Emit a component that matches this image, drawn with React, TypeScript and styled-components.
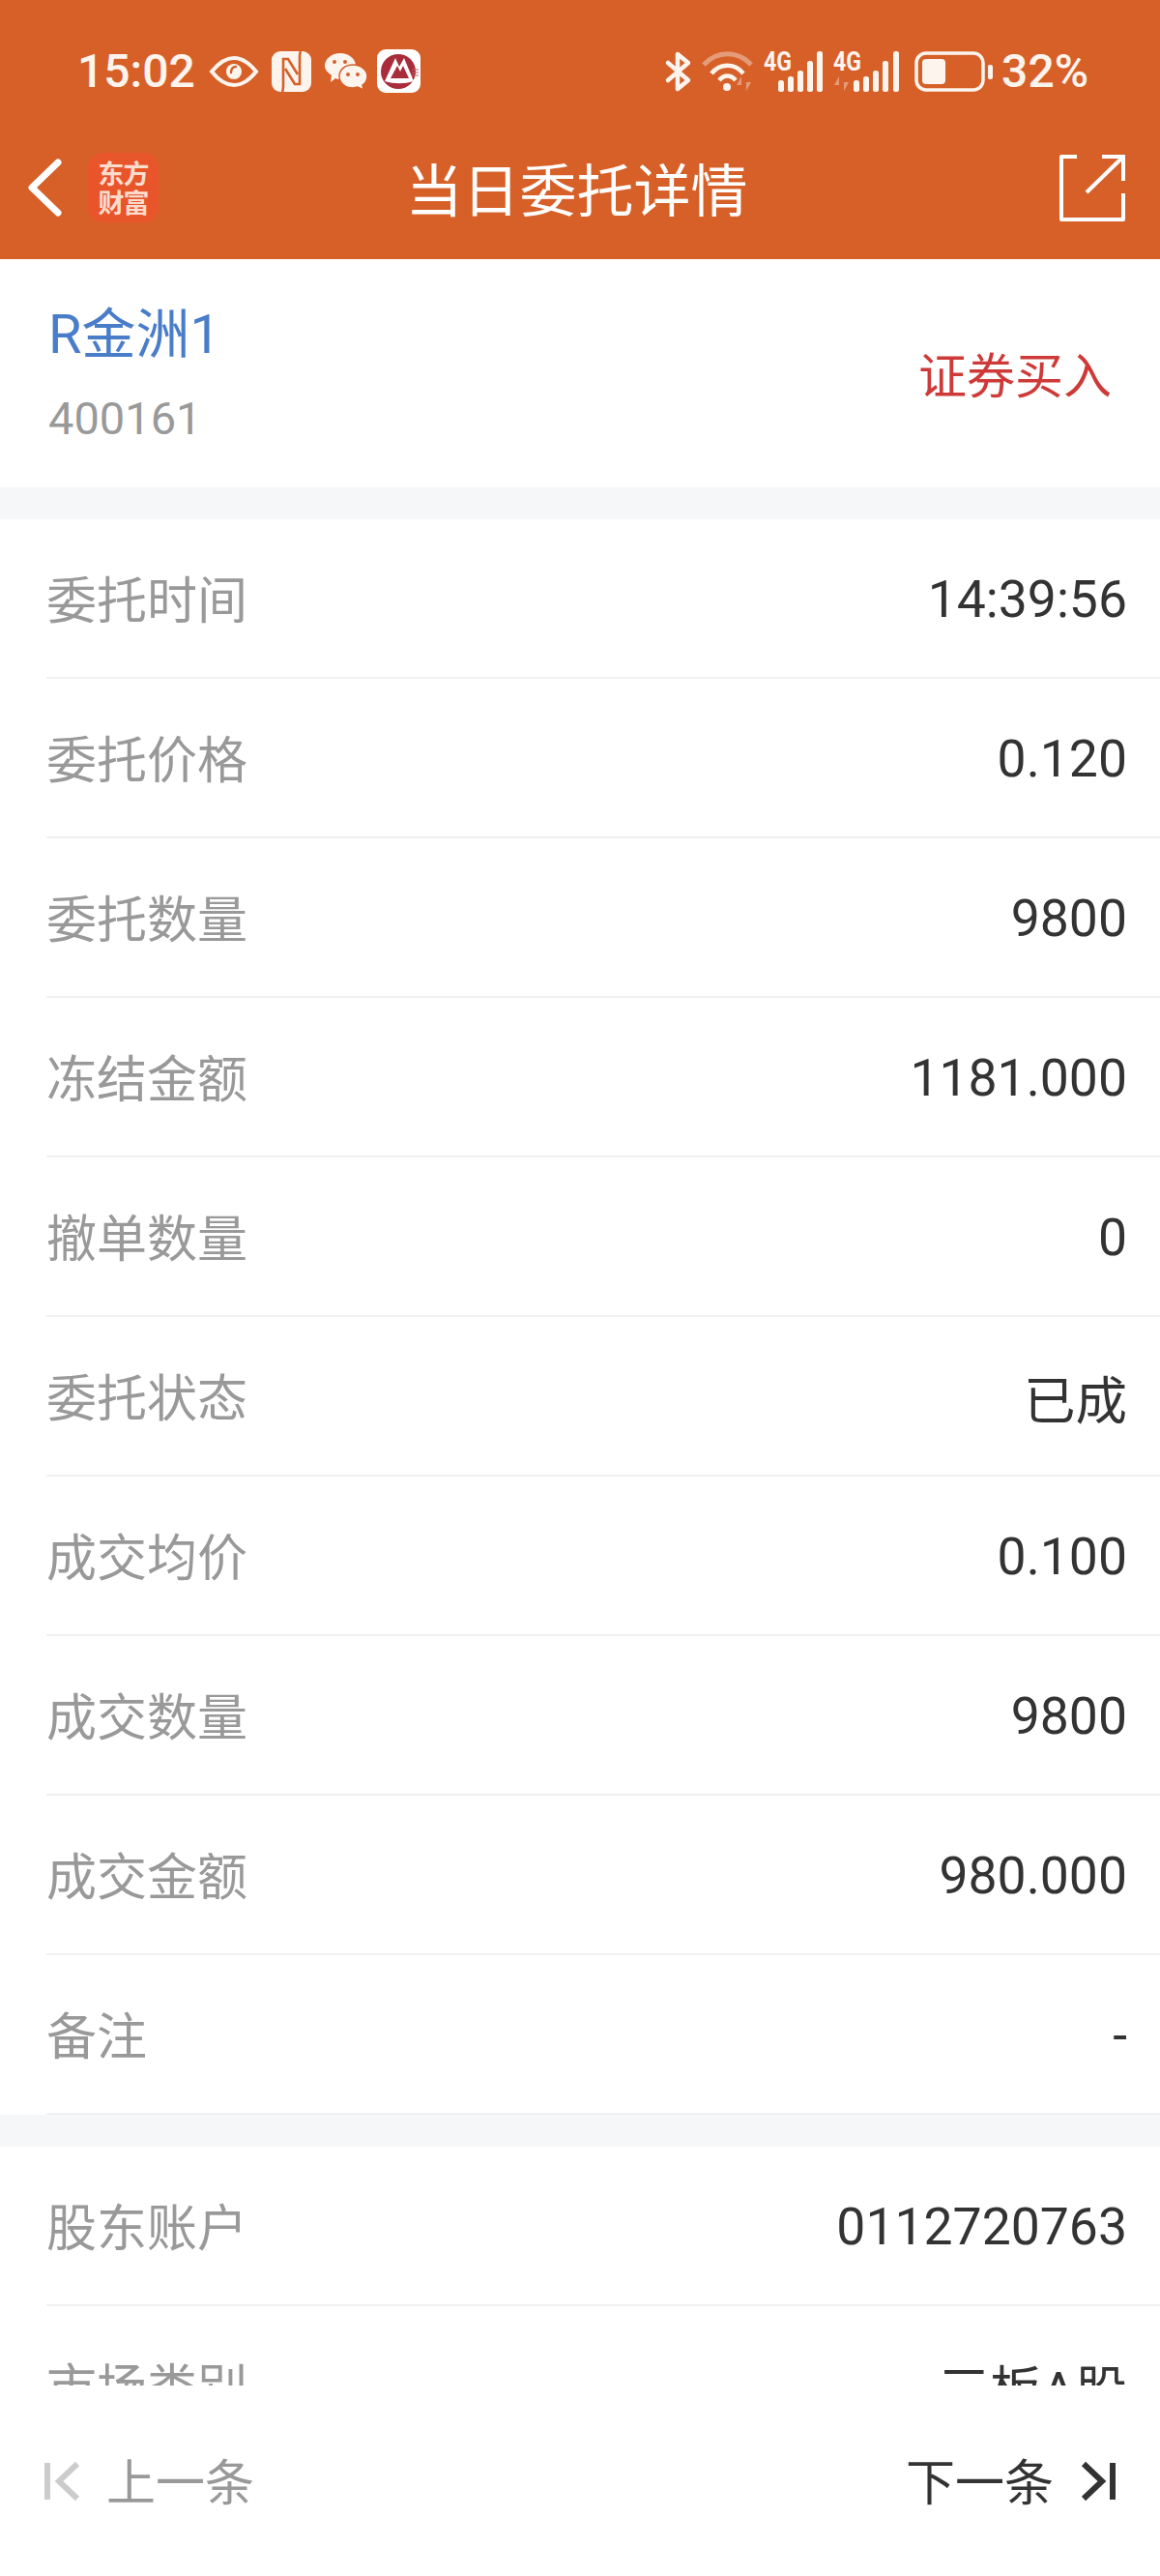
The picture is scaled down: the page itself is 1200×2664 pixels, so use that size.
import React from "react";
import styled, { createGlobalStyle } from "styled-components";

const GlobalStyle = createGlobalStyle`
  html, body {
    margin: 0;
    padding: 0;
    background: #fff;
  }
`;

const CJK = `"Noto Sans CJK SC", sans-serif`;
const DIGITS = `Roboto, "Noto Sans CJK SC", sans-serif`;
const CREAM = "#fdf4ee";
const ORANGE = "#d66028";

const Page = styled.div`
  width: 1200px;
  height: 2664px;
  display: flex;
  flex-direction: column;
  overflow: hidden;
  background: #fff;
  font-family: ${CJK};
`;

const Header = styled.header`
  height: 268px;
  flex: none;
  background: ${ORANGE};
  color: ${CREAM};
`;

const StatusBar = styled.div`
  height: 120px;
  box-sizing: border-box;
  padding: 27px 74px 0 80px;
  display: flex;
  align-items: center;
  justify-content: space-between;
`;

const StatusGroup = styled.div<{ $gap: number }>`
  display: flex;
  align-items: center;
  gap: ${(p) => p.$gap}px;
`;

const StatusText = styled.span<{ $nudge?: number }>`
  font-family: ${DIGITS};
  font-size: 48px;
  font-weight: 500;
  line-height: 46px;
  margin-left: ${(p) => p.$nudge ?? 0}px;
`;

const Nav = styled.nav`
  height: 148px;
  box-sizing: border-box;
  padding: 0 36px 0 29px;
  display: grid;
  grid-template-columns: 1fr auto 1fr;
  align-items: center;
`;

const NavLeft = styled.div`
  display: flex;
  align-items: center;
  gap: 28px;
`;

const NavRight = styled.div`
  display: flex;
  justify-content: flex-end;
`;

const NavTitle = styled.h1`
  margin: 0;
  font-size: 59px;
  font-weight: 400;
  line-height: 70px;
  color: #fff;
`;

const AppLogo = styled.div`
  width: 73px;
  height: 72px;
  border-radius: 15px;
  background: #e8552b;
  color: #fbdccd;
  font-size: 27px;
  font-weight: 700;
  line-height: 30px;
  letter-spacing: -1px;
  display: flex;
  align-items: center;
  justify-content: center;
  text-align: center;
`;

const Body = styled.main`
  flex: 1;
  min-height: 0;
  overflow: hidden;
`;

const StockBlock = styled.section`
  height: 236px;
  box-sizing: border-box;
  padding: 0 50px;
  display: flex;
  align-items: center;
  justify-content: space-between;
`;

const StockName = styled.div`
  font-family: ${DIGITS};
  font-size: 56px;
  line-height: 66px;
  color: #4a7dc9;
`;

const StockCode = styled.div`
  font-family: ${DIGITS};
  font-size: 47px;
  line-height: 54px;
  color: #999;
  margin-top: 27px;
`;

const TradeType = styled.div`
  font-size: 50px;
  line-height: 60px;
  padding-bottom: 3px;
  color: #cd3a37;
`;

const Band = styled.div`
  height: 33px;
  background: #f6f7f9;
`;

const Row = styled.div`
  height: 165px;
  box-sizing: border-box;
  padding-left: 48px;
`;

const RowInner = styled.div`
  height: 100%;
  box-sizing: border-box;
  padding-right: 34px;
  border-bottom: 2px solid #f1f1f2;
  display: flex;
  align-items: center;
  justify-content: space-between;
`;

const Label = styled.span`
  font-size: 52px;
  padding-bottom: 3px;
  color: #999;
`;

const Value = styled.span`
  font-family: ${DIGITS};
  font-size: 53.5px;
  padding-top: 1px;
  color: #333;
`;

const Footer = styled.footer`
  height: 197px;
  flex: none;
  box-sizing: border-box;
  padding: 0 45px 0 46px;
  background: #fff;
  display: flex;
  align-items: center;
  justify-content: space-between;
`;

const Pager = styled.div<{ $active?: boolean }>`
  display: flex;
  align-items: center;
  gap: 28px;
  font-size: 51px;
  line-height: 60px;
  color: ${(p) => (p.$active ? "#333" : "#999")};
`;

const PagerText = styled.span`
  padding-bottom: 3px;
`;

const Svg = styled.svg<{ $nudge?: number }>`
  display: block;
  flex: none;
  overflow: visible;
  margin-left: ${(p) => p.$nudge ?? 0}px;
`;

const SmallLabel = styled.text`
  font-family: Roboto, sans-serif;
  font-weight: 700;
  font-size: 27px;
`;

const EyeIcon = () => (
  <Svg width="50" height="32" viewBox="0 0 50 32" fill="none" $nudge={1}>
    <path d="M2 16C10 6 17 2 25 2s15 4 23 14c-8 10-15 14-23 14S10 26 2 16z" stroke={CREAM} strokeWidth="4" />
    <circle cx="25" cy="16" r="8" fill={CREAM} />
    <path d="M22 17c0-4 2-6 5-6" stroke={ORANGE} strokeWidth="2.4" strokeLinecap="round" />
  </Svg>
);

const NfcIcon = () => (
  <Svg width="41" height="42" viewBox="0 0 41 42">
    <rect width="41" height="42" rx="9" fill={CREAM} />
    <path d="M11 42c1-2 1-4 1-6V8h5l10 16" fill="none" stroke={ORANGE} strokeWidth="2.6" />
    <path d="M30 0c-1 2-1 4-1 6v28h-5L14 18" fill="none" stroke={ORANGE} strokeWidth="2.6" />
  </Svg>
);

const WechatIcon = () => (
  <Svg width="44" height="38" viewBox="0 0 44 38">
    <path d="M16 0c9 0 16 6 16 13 0 8-7 14-16 14-2 0-3 0-5-1l-5 4 1-7C3 20 0 17 0 13 0 6 7 0 16 0z" fill={CREAM} />
    <path d="M29 12c8 0 15 5 15 12 0 4-2 7-5 9l1 5-6-3c-2 0-3 1-5 1-8 0-14-5-14-12s6-12 14-12z" fill={CREAM} stroke={ORANGE} strokeWidth="1.5" />
    <circle cx="10" cy="9" r="2" fill={ORANGE} />
    <circle cx="21" cy="9" r="2" fill={ORANGE} />
    <circle cx="24" cy="22" r="2" fill={ORANGE} />
    <circle cx="34" cy="22" r="2" fill={ORANGE} />
  </Svg>
);

const BankIcon = () => (
  <Svg width="45" height="45" viewBox="0 0 45 45" $nudge={-4}>
    <rect width="45" height="45" rx="9" fill="#fff" />
    <circle cx="22" cy="23" r="18" fill="#a82c39" />
    <path d="M8 33L19 9l4 9 5-9 10 24c-10 3-20 3-30 0z" fill="#fff" />
    <path d="M14 30l7-13 3 6 3-6 6 13z" fill="#a82c39" />
    <path d="M36 21h7M36 24h7M36 27h7" stroke="#c45a66" strokeWidth="1.2" />
  </Svg>
);

const BluetoothIcon = () => (
  <Svg width="27" height="42" viewBox="0 0 27 42" fill="none">
    <path d="M3 12l21 18-11 9V3l11 9L3 30" stroke={CREAM} strokeWidth="4.5" strokeLinejoin="round" strokeLinecap="round" />
  </Svg>
);

const WifiIcon = () => (
  <Svg width="53" height="42" viewBox="0 0 53 42" fill="none">
    <path d="M2 14C16 -1 37 -1 51 14" stroke={CREAM} strokeOpacity="0.4" strokeWidth="5" />
    <path d="M10 23C19 12 34 12 43 23" stroke={CREAM} strokeWidth="4.5" />
    <path d="M18 30C23 24 30 24 35 30" stroke={CREAM} strokeWidth="4.5" />
    <circle cx="26" cy="37" r="4" fill={CREAM} />
    <path d="M41 41V26l-5 9h5M46 26v15l5-9h-5" fill={CREAM} fillOpacity="0.4" />
  </Svg>
);

const SIGNAL_TOPS = [30, 26, 20, 10, 0];

const SignalIcon = ({ bars, arrows }: { bars: number[]; arrows?: boolean }) => (
  <Svg width={bars[4] + 6} height="42" viewBox={`0 0 ${bars[4] + 6} 42`}>
    <SmallLabel x="0" y="20" fill={CREAM} textLength="29" lengthAdjust="spacingAndGlyphs">4G</SmallLabel>
    {bars.map((x, i) => (
      <rect key={x} x={x} y={SIGNAL_TOPS[i]} width="6" height={42 - SIGNAL_TOPS[i]} rx="2.5" fill={CREAM} />
    ))}
    {arrows && <path d="M6 41V26l-5 9h5M11 26v15l5-9h-5" fill={CREAM} fillOpacity="0.4" />}
  </Svg>
);

const BatteryIcon = () => (
  <Svg width="81" height="42" viewBox="0 0 81 42" $nudge={5}>
    <rect x="2" y="2" width="69" height="38" rx="10" fill="none" stroke={CREAM} strokeWidth="3.5" />
    <rect x="8" y="8" width="24" height="26" rx="4" fill={CREAM} />
    <rect x="76" y="14" width="5" height="15" rx="2" fill={CREAM} />
  </Svg>
);

const BackIcon = () => (
  <Svg width="34" height="58" viewBox="0 0 34 58" fill="none">
    <path d="M31 3L4 29l27 26" stroke="#fff" strokeWidth="7" strokeLinecap="round" strokeLinejoin="round" />
  </Svg>
);

const ShareIcon = () => (
  <Svg width="68" height="69" viewBox="0 0 68 69" fill="none" $nudge={0}>
    <path d="M18 2H2v65h64V40" stroke="#fff" strokeWidth="4" strokeLinejoin="round" />
    <path d="M28 39L66 2M44 2h22v25" stroke="#fff" strokeWidth="4" />
  </Svg>
);

const PrevIcon = () => (
  <Svg width="36" height="40" viewBox="0 0 36 40" fill="none">
    <path d="M3 1v38" stroke="#ccc" strokeWidth="6" />
    <path d="M34 2L15 20l19 18" stroke="#ccc" strokeWidth="6" />
  </Svg>
);

const NextIcon = () => (
  <Svg width="37" height="40" viewBox="0 0 37 40" fill="none">
    <path d="M3 2l19 18L3 38" stroke="#333" strokeWidth="6" />
    <path d="M33 1v38" stroke="#333" strokeWidth="6" />
  </Svg>
);

const orderRows = [
  ["委托时间", "14:39:56"],
  ["委托价格", "0.120"],
  ["委托数量", "9800"],
  ["冻结金额", "1181.000"],
  ["撤单数量", "0"],
  ["委托状态", "已成"],
  ["成交均价", "0.100"],
  ["成交数量", "9800"],
  ["成交金额", "980.000"],
  ["备注", "-"],
];

const accountRows = [
  ["股东账户", "0112720763"],
  ["市场类别", "三板A股"],
];

const DetailRows = ({ rows }: { rows: string[][] }) => (
  <>
    {rows.map(([label, value]) => (
      <Row key={label}>
        <RowInner>
          <Label>{label}</Label>
          <Value>{value}</Value>
        </RowInner>
      </Row>
    ))}
  </>
);

export default function App() {
  return (
    <Page>
      <GlobalStyle />
      <Header>
        <StatusBar>
          <StatusGroup $gap={14}>
            <StatusText>15:02</StatusText>
            <EyeIcon />
            <NfcIcon />
            <WechatIcon />
            <BankIcon />
          </StatusGroup>
          <StatusGroup $gap={11}>
            <BluetoothIcon />
            <WifiIcon />
            <SignalIcon bars={[15, 25, 35, 45, 55]} />
            <SignalIcon bars={[21, 31, 41, 51, 62]} arrows />
            <BatteryIcon />
            <StatusText $nudge={-2}>32%</StatusText>
          </StatusGroup>
        </StatusBar>
        <Nav>
          <NavLeft>
            <BackIcon />
            <AppLogo>东方<br />财富</AppLogo>
          </NavLeft>
          <NavTitle>当日委托详情</NavTitle>
          <NavRight>
            <ShareIcon />
          </NavRight>
        </Nav>
      </Header>
      <Body>
        <StockBlock>
          <div>
            <StockName>R金洲1</StockName>
            <StockCode>400161</StockCode>
          </div>
          <TradeType>证券买入</TradeType>
        </StockBlock>
        <Band />
        <DetailRows rows={orderRows} />
        <Band />
        <DetailRows rows={accountRows} />
      </Body>
      <Footer>
        <Pager>
          <PrevIcon />
          <PagerText>上一条</PagerText>
        </Pager>
        <Pager $active>
          <PagerText>下一条</PagerText>
          <NextIcon />
        </Pager>
      </Footer>
    </Page>
  );
}
